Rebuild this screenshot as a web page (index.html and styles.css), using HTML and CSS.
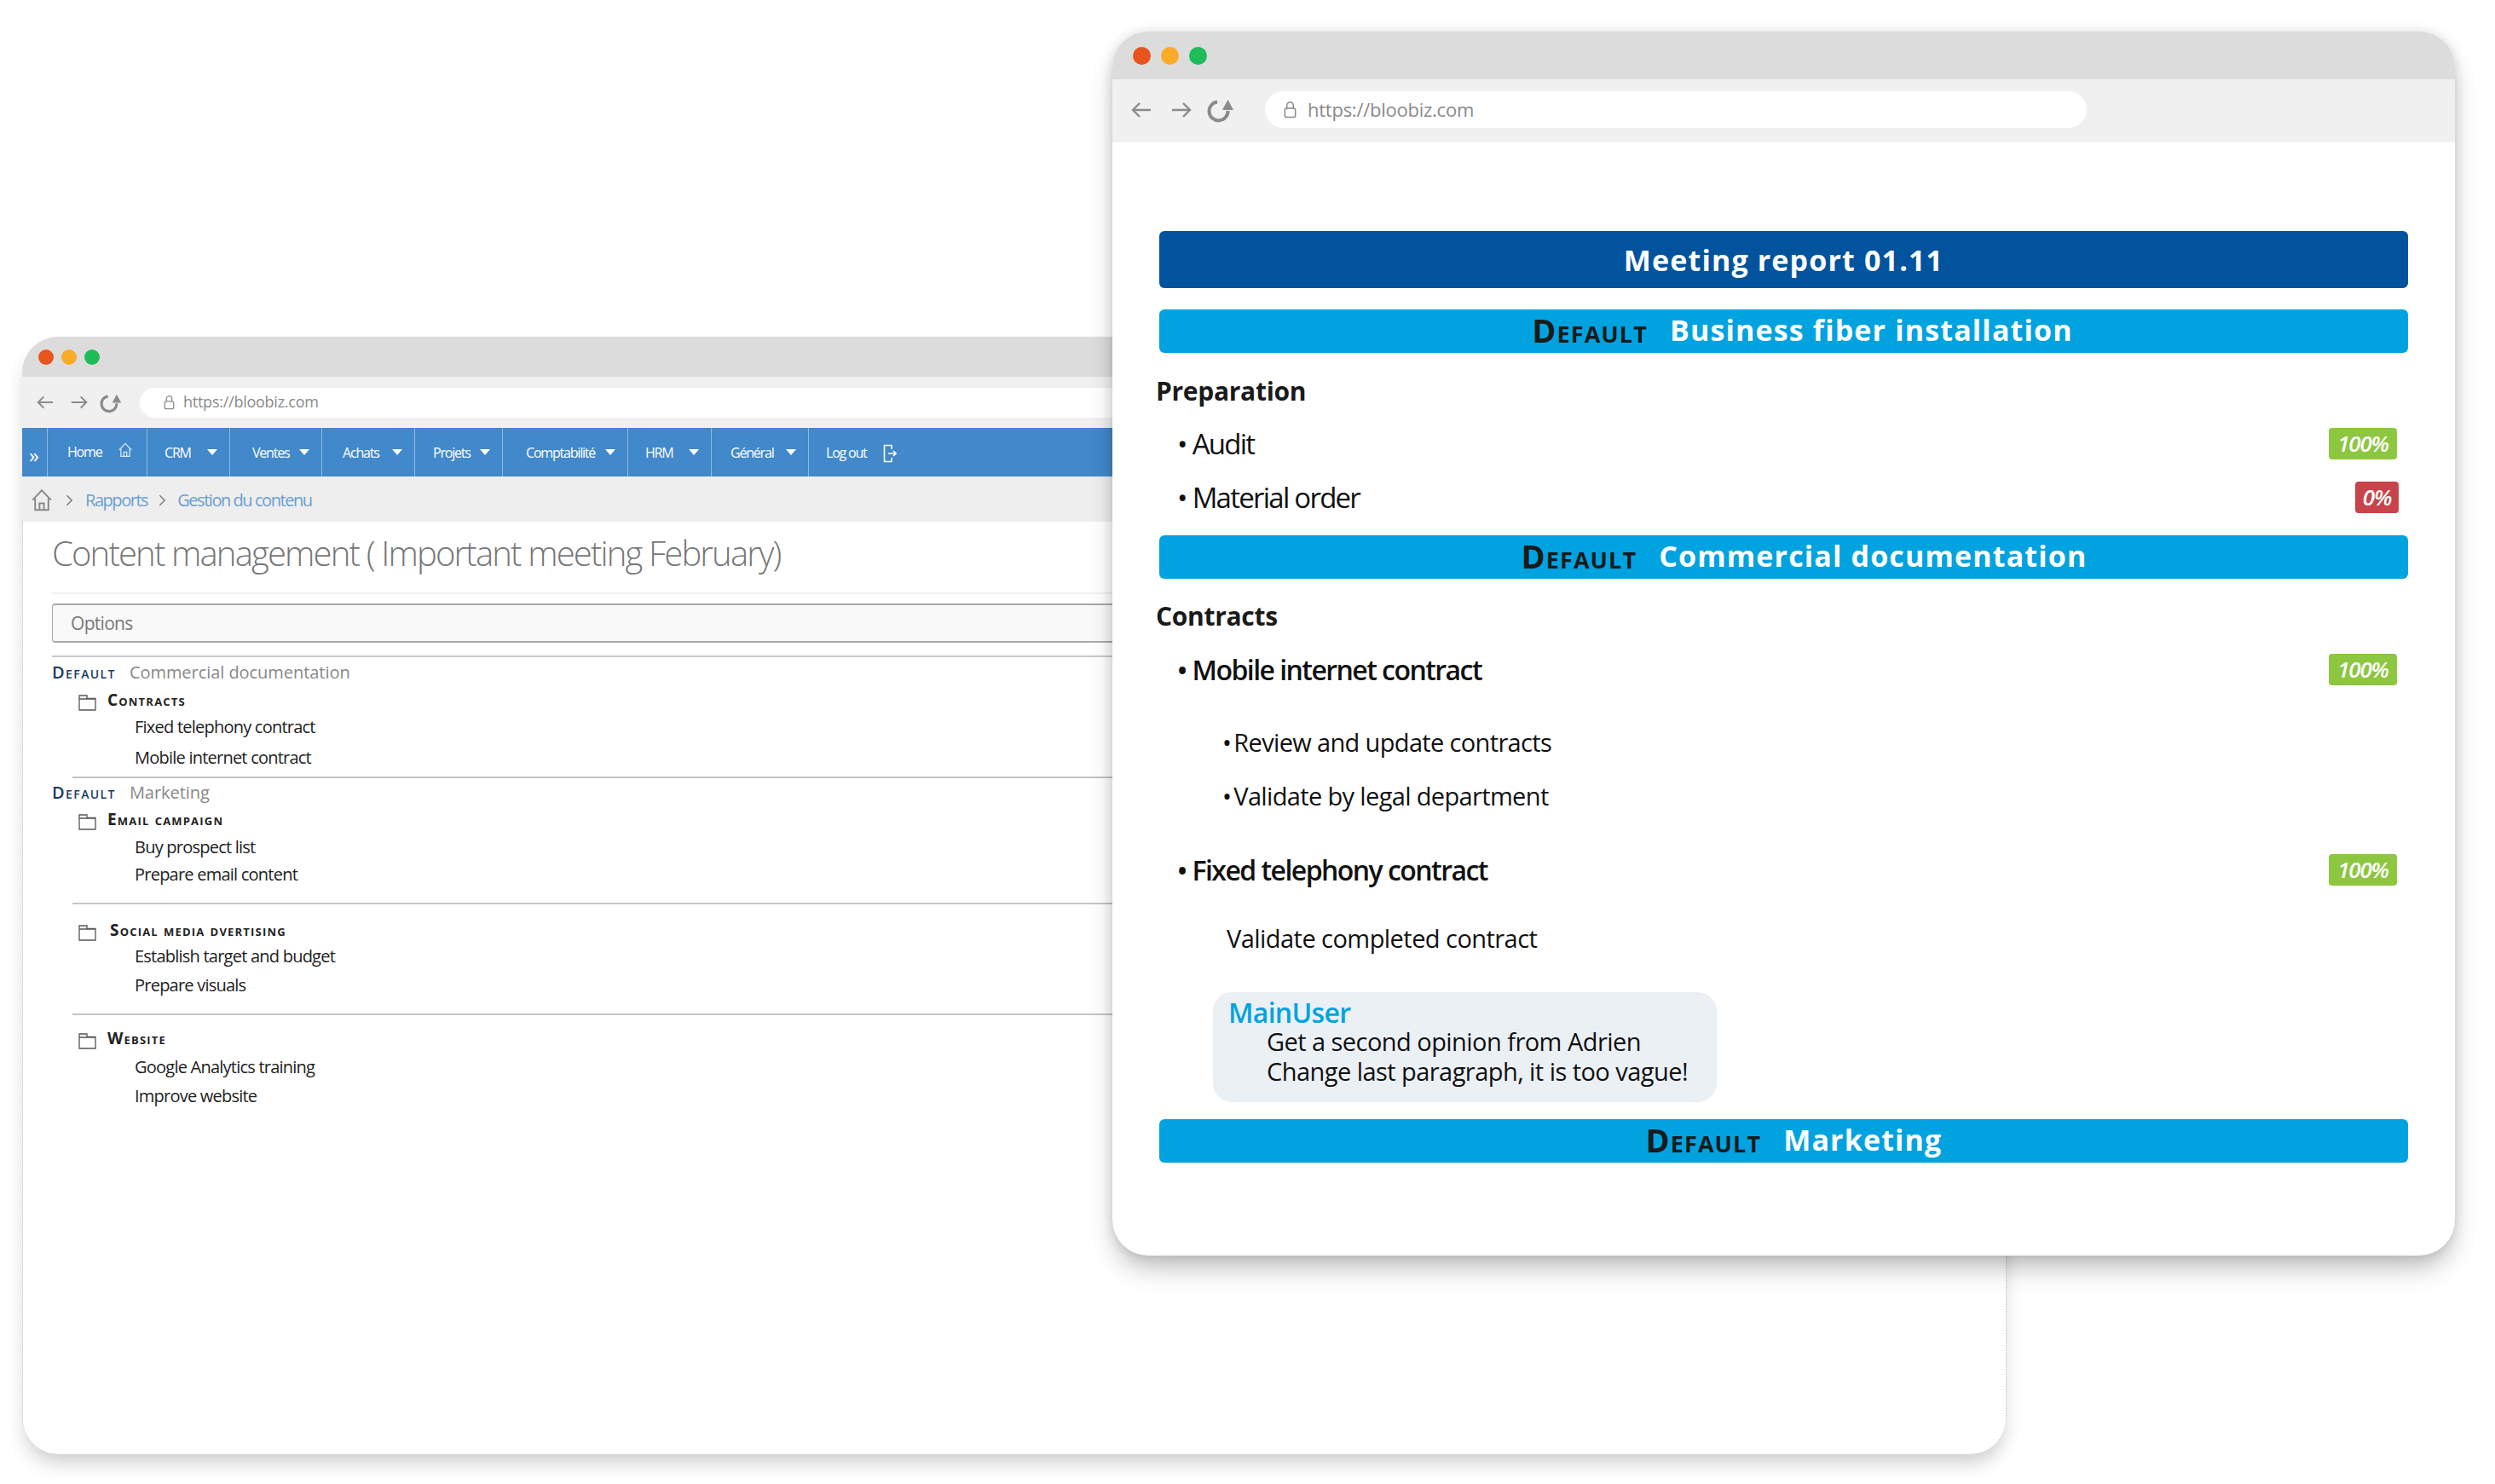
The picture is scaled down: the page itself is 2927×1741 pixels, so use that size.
FILE: index.html
```html
<!DOCTYPE html>
<html lang="en">
<head>
<meta charset="utf-8">
<title>Bloobiz</title>
<link rel="stylesheet" href="styles.css">
</head>
<body>
<svg class="defs" width="0" height="0" aria-hidden="true">
  <symbol id="i-left" viewBox="0 0 26 24"><path d="M24 12H3M11 4l-8 8 8 8" fill="none" stroke="currentColor" stroke-width="2.4"/></symbol>
  <symbol id="i-right" viewBox="0 0 26 24"><path d="M2 12h21M15 4l8 8-8 8" fill="none" stroke="currentColor" stroke-width="2.4"/></symbol>
  <symbol id="i-reload" viewBox="0 0 32 30"><path d="M12 5.500A11 11 0 1 0 24.500 16" fill="none" stroke="currentColor" stroke-width="4"/><path d="M24.500 3l6.500 12H18z" fill="currentColor"/></symbol>
  <symbol id="i-lock" viewBox="0 0 16 22"><path d="M4 10V6a4 4 0 0 1 8 0v4" fill="none" stroke="currentColor" stroke-width="1.600"/><rect x="1.500" y="9.500" width="13" height="11" rx="2.500" fill="none" stroke="currentColor" stroke-width="1.600"/></symbol>
  <symbol id="i-home" viewBox="0 0 28 30"><path d="M1.500 14.500 14 1.500l12.500 13M5 12.500V28h18V12.500M11 28v-9h6v9" fill="none" stroke="currentColor" stroke-width="2.200"/></symbol>
  <symbol id="i-folder" viewBox="0 0 21 19"><path d="M1 18V1h9v3.500h10V18zM1 5h19" fill="none" stroke="currentColor" stroke-width="1.300"/></symbol>
  <symbol id="i-out" viewBox="0 0 16 22"><path d="M10 6V1.500H1.500v19H10V16M6 11h9M12 8l3 3-3 3" fill="none" stroke="currentColor" stroke-width="1.600"/></symbol>
  <symbol id="i-chev" viewBox="0 0 10 16"><path d="M1.500 1.500 8 8l-6.500 6.500" fill="none" stroke="currentColor" stroke-width="1.500"/></symbol>
</svg>

<section class="window back">
  <div class="titlebar"><span class="dot red"></span><span class="dot amber"></span><span class="dot green"></span></div>
  <div class="toolbar">
    <svg class="nav arrow"><use href="#i-left"/></svg>
    <svg class="nav arrow"><use href="#i-right"/></svg>
    <svg class="nav reload"><use href="#i-reload"/></svg>
    <div class="urlbar"><svg class="lock"><use href="#i-lock"/></svg><span>https://bloobiz.com</span></div>
  </div>
  <nav class="menu">
    <div class="m-item m-toggle">»</div>
    <div class="m-item"><span>Home</span><svg class="m-home"><use href="#i-home"/></svg></div>
    <div class="m-item"><span>CRM</span><i class="caret"></i></div>
    <div class="m-item"><span>Ventes</span><i class="caret"></i></div>
    <div class="m-item"><span>Achats</span><i class="caret"></i></div>
    <div class="m-item"><span>Projets</span><i class="caret"></i></div>
    <div class="m-item"><span>Comptabilité</span><i class="caret"></i></div>
    <div class="m-item"><span>HRM</span><i class="caret"></i></div>
    <div class="m-item"><span>Général</span><i class="caret"></i></div>
    <div class="m-item m-last"><span>Log out</span><svg class="m-out"><use href="#i-out"/></svg></div>
  </nav>
  <div class="crumbs">
    <svg class="c-home"><use href="#i-home"/></svg>
    <svg class="c-chev"><use href="#i-chev"/></svg>
    <a>Rapports</a>
    <svg class="c-chev"><use href="#i-chev"/></svg>
    <a>Gestion du contenu</a>
  </div>
  <main class="content">
    <h1>Content management ( Important meeting February)</h1>
    <hr class="rule rule-light">
    <div class="options">Options</div>
    <hr class="rule rule-top">

    <div class="group-head mt2"><b>Default</b><span>Commercial documentation</span></div>
    <div class="folder-head mt4"><svg class="folder"><use href="#i-folder"/></svg><b>Contracts</b></div>
    <p class="leaf mt1">Fixed telephony contract</p>
    <p class="leaf mt6">Mobile internet contract</p>
    <hr class="rule rule-in mt7">

    <div class="group-head mt1"><b>Default</b><span>Marketing</span></div>
    <div class="folder-head mt3"><svg class="folder"><use href="#i-folder"/></svg><b>Email campaign</b></div>
    <p class="leaf mt2">Buy prospect list</p>
    <p class="leaf mt2">Prepare email content</p>
    <hr class="rule rule-in mt18">

    <div class="folder-head mt16"><svg class="folder"><use href="#i-folder"/></svg><b class="nudge">Social media dvertising</b></div>
    <p class="leaf">Establish target and budget</p>
    <p class="leaf mt4">Prepare visuals</p>
    <hr class="rule rule-in mt18">

    <div class="folder-head mt13"><svg class="folder"><use href="#i-folder"/></svg><b>Website</b></div>
    <p class="leaf mt3">Google Analytics training</p>
    <p class="leaf mt4">Improve website</p>
  </main>
</section>

<section class="window front">
  <div class="titlebar"><span class="dot red"></span><span class="dot amber"></span><span class="dot green"></span></div>
  <div class="toolbar">
    <svg class="nav arrow"><use href="#i-left"/></svg>
    <svg class="nav arrow"><use href="#i-right"/></svg>
    <svg class="nav reload"><use href="#i-reload"/></svg>
    <div class="urlbar"><svg class="lock"><use href="#i-lock"/></svg><span>https://bloobiz.com</span></div>
  </div>
  <main class="report">
    <h1 class="bar bar-title">Meeting report 01.11</h1>
    <h2 class="bar bar-sec bar-biz mt25"><b>Default</b><span>Business fiber installation</span></h2>
    <h3 class="heading mt23">Preparation</h3>
    <div class="task mt17"><span class="label"><i>•</i>Audit</span><span class="badge ok">100%</span></div>
    <div class="task mt19"><span class="label"><i>•</i>Material order</span><span class="badge ko">0%</span></div>
    <h2 class="bar bar-sec bar-com mt23"><b>Default</b><span>Commercial documentation</span></h2>
    <h3 class="heading mt22">Contracts</h3>
    <div class="task task-strong mt18"><span class="label"><i>•</i>Mobile internet contract</span><span class="badge ok">100%</span></div>
    <div class="sub mt42"><i>•</i>Review and update contracts</div>
    <div class="sub mt19"><i>•</i>Validate by legal department</div>
    <div class="task task-strong mt42"><span class="label"><i>•</i>Fixed telephony contract</span><span class="badge ok">100%</span></div>
    <div class="plain mt37">Validate completed contract</div>
    <div class="note mt41">
      <div class="note-user">MainUser</div>
      <p>Get a second opinion from Adrien</p>
      <p>Change last paragraph, it is too vague!</p>
    </div>
    <h2 class="bar bar-sec bar-mkt mt20"><b>Default</b><span>Marketing</span></h2>
  </main>
</section>
</body>
</html>
```
FILE: styles.css
```css
* { box-sizing: border-box; }
html, body { margin: 0; padding: 0; }
body {
  position: relative;
  width: 2927px;
  height: 1741px;
  overflow: hidden;
  background: #fff;
  font-family: "Open Sans", "Liberation Sans", sans-serif;
  color: #111;
}
.defs { position: absolute; }
h1, h2, h3, p { margin: 0; font-weight: inherit; }

/* Windows on the desktop */
.window {
  position: absolute;
  display: flex;
  flex-direction: column;
  background: #fff;
  border-radius: 42px;
}
.back {
  left: 26px; top: 395px; width: 2328px; height: 1311px;
  box-shadow: 0 14px 22px -4px rgba(0,0,0,.2);
}
.front {
  left: 1305px; top: 37px; width: 1575px; height: 1436px;
  box-shadow: 0 18px 30px -4px rgba(0,0,0,.26), 0 0 14px rgba(0,0,0,.12);
}
.titlebar {
  display: flex; align-items: center;
  background: #dcdcdc;
  border-radius: 42px 42px 0 0;
  flex: none;
}
.back .titlebar { height: 47px; padding-left: 19px; gap: 9px; }
.front .titlebar { height: 56px; padding-left: 24px; gap: 12px; }
.dot { display: block; border-radius: 50%; }
.back .dot { width: 18px; height: 18px; }
.front .dot { width: 21px; height: 21px; }
.red { background: #e8541e; }
.amber { background: #fbab2a; }
.green { background: #1fbc5a; }

.toolbar {
  display: flex; align-items: center;
  background: #f0f0f0; color: #8b8b8b;
  flex: none;
}
.back .toolbar { height: 60px; padding-left: 16px; }
.front .toolbar { height: 74px; padding: 0 0 3px 21px; }
.nav { display: block; flex: none; }
.back .arrow { width: 22px; height: 20px; margin-right: 18px; }
.back .reload { width: 26px; height: 25px; margin: 0 21px 0 -5px; }
.front .arrow { width: 26px; height: 24px; margin-right: 21px; }
.front .reload { width: 32px; height: 30px; margin: 0 36px 0 -4px; }
.urlbar {
  display: flex; align-items: center;
  background: #fff;
  color: #8a8a8a;
  letter-spacing: -.25px;
}
.urlbar span { margin-top: -2px; }
.back .urlbar { width: 2180px; height: 35px; border-radius: 18px; padding-left: 28px; font-size: 18px; }
.back .lock { width: 13px; height: 18px; margin-right: 10px; }
.front .urlbar { width: 964px; height: 43px; border-radius: 22px; padding-left: 21px; font-size: 22px; }
.front .lock { width: 17px; height: 21px; margin-right: 12px; }

/* Menu */
.menu {
  display: grid;
  grid-template-columns: 30px 117px 97px 108px 109px 103px 147px 98px 114px 1fr;
  height: 57px;
  background: #4189cb;
  color: #fff;
  font-size: 16px;
  letter-spacing: -1.2px;
  flex: none;
}
.m-item {
  display: flex; align-items: center; justify-content: space-between;
  padding: 0 14px 0 22px;
  border-right: 1px solid #8bb8e2;
}
.m-item:nth-child(2) { padding-left: 23px; padding-right: 17px; }
.m-item:nth-child(2) span { margin-top: -2px; }
.m-item:nth-child(3) { padding-left: 20px; }
.m-item:nth-child(4) { padding-left: 26px; }
.m-item:nth-child(5) { padding-left: 24px; }
.m-item:nth-child(6) { padding-left: 21px; }
.m-item:nth-child(7) { padding-left: 27px; }
.m-item:nth-child(8) { padding-left: 20px; }
.m-toggle { padding: 6px 0 0 8px; font-size: 24px; font-weight: 400; letter-spacing: -.5px; }
.m-last {
  border-right: 0;
  justify-content: flex-start;
  padding-left: 20px;
}
.caret {
  width: 0; height: 0;
  border-left: 6px solid transparent;
  border-right: 6px solid transparent;
  border-top: 7px solid #fff;
}
.m-home { width: 16px; height: 20px; margin-top: -6px; color: #dbe9f6; }
.m-out { width: 16px; height: 22px; margin-left: 19px; margin-top: 2px; }

/* Breadcrumb */
.crumbs {
  display: flex; align-items: center;
  height: 53px;
  padding: 2px 0 0 9px;
  background: #eee;
  color: #6aa0d2;
  font-size: 20px;
  letter-spacing: -1.45px;
  flex: none;
}
.c-home { width: 28px; height: 26px; color: #888; margin-right: 14px; }
.c-chev { width: 9px; height: 16px; color: #777; margin-right: 14px; }
.crumbs a + .c-chev { margin-left: 13px; margin-right: 13px; }

/* Back window content */
.content {
  flex: 1;
  padding: 8px 0 0 34px;
  border-left: 1px dotted #bbb;
  border-right: 1px dotted #bbb;
  border-radius: 0 0 42px 42px;
}
.content h1 {
  height: 60px; line-height: 58px;
  font-size: 40px; font-weight: 300;
  letter-spacing: -1.83px;
  color: #777;
  white-space: nowrap;
}
.rule { display: block; border: 0; height: 2px; background: #c9c9c9; margin: 0; }
.rule-light { background: #efefef; margin-top: 15px; }
.rule-top { margin-top: 15px; }
.rule-in { margin-left: 24px; background: #c4c4c4; }
.options {
  height: 46px; line-height: 42px;
  margin-top: 11px;
  padding-left: 21px;
  font-size: 21px;
  letter-spacing: -.7px;
  color: #777;
  background: #f9f9f9;
  border: 1px solid #a8a8a8;
  border-width: 2px 1px;
  border-radius: 4px;
}
.group-head {
  display: flex; align-items: center; gap: 16px;
  height: 30px;
  font-size: 20px;
}
.group-head b {
  font-variant: small-caps; font-weight: 600;
  color: #1d3a63; letter-spacing: 1.4px;
  font-size: 20px;
}
.group-head span { color: #888; letter-spacing: -.05px; }
.folder-head {
  display: flex; align-items: center;
  height: 30px;
  padding-left: 31px;
  font-size: 19px;
}
.folder-head b {
  font-variant: small-caps; font-weight: 700;
  letter-spacing: 1.2px; color: #222;
  margin-top: -3px;
}
.folder-head .nudge { margin-left: 3px; }
.folder { width: 21px; height: 19px; margin-right: 13px; color: #555; margin-top: 4px; }
.leaf {
  height: 30px; line-height: 29px;
  padding-left: 97px;
  font-size: 20px; font-weight: 400;
  letter-spacing: -.77px;
  color: #222;
}

/* Front window content */
.report {
  flex: 1;
  padding: 104px 55px 0;
}
.bar {
  display: flex; align-items: center; justify-content: center; gap: 26px;
  border-radius: 6px;
  color: #fff;
  font-weight: 700;
  font-size: 34px;
  letter-spacing: 1.15px;
}
.bar-title { height: 67px; background: #00539c; }
.bar-sec { height: 51px; padding-bottom: 3px; background: #00a3e0; }
.bar-biz { padding-left: 44px; }
.bar-com { padding-left: 48px; }
.bar-mkt { padding-left: 24px; }
.bar-sec b {
  font-variant: small-caps; font-weight: 700; color: #1a1a1a;
  font-size: 38px; letter-spacing: 1.1px;
}
.heading {
  height: 44px; line-height: 44px;
  margin-left: -4px;
  font-size: 30px; font-weight: 700;
  letter-spacing: -.3px;
  color: #1a1a1a;
}
.task {
  display: flex; align-items: center; justify-content: space-between;
  height: 44px;
  padding: 0 13px 0 21px;
  font-size: 33px;
  letter-spacing: -1.75px;
}
.task i, .sub i {
  font-style: normal;
  display: inline-block;
}
.task i { margin-right: 7px; }
.task-strong { font-size: 32px; font-weight: 600; letter-spacing: -1.55px; }
.badge {
  display: flex; align-items: center; justify-content: center;
  height: 37px; border-radius: 4px;
  color: #fff;
  font-size: 26px; font-style: italic; font-weight: 600;
  letter-spacing: -1.2px;
}
.ok { width: 80px; background: #8dc63f; }
.ko { width: 51px; background: #c9434b; margin-right: -2px; }
.sub {
  height: 44px; line-height: 44px;
  padding-left: 74px;
  font-size: 29px;
  letter-spacing: -.65px;
}
.sub i { margin-right: 3px; }
.plain {
  height: 44px; line-height: 44px;
  padding-left: 79px;
  font-size: 29px;
  letter-spacing: -.55px;
}
.note {
  width: 591px; height: 129px;
  margin-left: 63px;
  padding: 6px 0 0 18px;
  background: #ebf0f5;
  border-radius: 22px;
  font-size: 29px;
  line-height: 35px;
  letter-spacing: -.55px;
}
.note-user {
  color: #00a3e0; font-weight: 600; font-size: 32px; letter-spacing: -.7px; margin-bottom: -1px;
}
.note p { padding-left: 45px; }

/* Spacing helpers */
.mt1 { margin-top: 1px; } .mt2 { margin-top: 2px; } .mt3 { margin-top: 3px; }
.mt4 { margin-top: 4px; } .mt6 { margin-top: 6px; } .mt7 { margin-top: 7px; }
.mt13 { margin-top: 13px; } .mt16 { margin-top: 16px; } .mt17 { margin-top: 17px; }
.mt18 { margin-top: 18px; } .mt19 { margin-top: 19px; } .mt20 { margin-top: 20px; }
.mt22 { margin-top: 22px; } .mt23 { margin-top: 23px; }
.mt25 { margin-top: 25px; } .mt37 { margin-top: 37px; } .mt41 { margin-top: 41px; }
.mt42 { margin-top: 42px; }
```
